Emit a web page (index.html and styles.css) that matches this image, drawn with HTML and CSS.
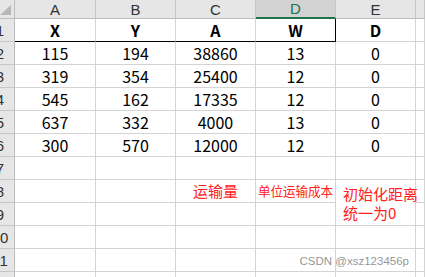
FILE: index.html
```html
<!DOCTYPE html>
<html lang="zh-CN">
<head>
<meta charset="utf-8">
<title>Sheet</title>
<link rel="stylesheet" href="styles.css">
</head>
<body>
<div class="viewport">
  <div class="sheet">
    <div class="corner"><svg class="tri" width="11" height="10" viewBox="0 0 11 10"><polygon points="11,0 11,10 0,10" fill="#b8b8b8"/></svg></div>
    <div class="colh">A</div>
    <div class="colh">B</div>
    <div class="colh">C</div>
    <div class="colh sel">D</div>
    <div class="colh">E</div>
    <div class="colh"></div>

    <div class="rowh">1</div>
    <div class="cell hd bb">X</div>
    <div class="cell hd bb">Y</div>
    <div class="cell hd bb">A</div>
    <div class="cell hd bb br">W</div>
    <div class="cell hd">D</div>
    <div class="cell"></div>

    <div class="rowh">2</div>
    <div class="cell num">115</div>
    <div class="cell num">194</div>
    <div class="cell num">38860</div>
    <div class="cell num">13</div>
    <div class="cell num">0</div>
    <div class="cell"></div>

    <div class="rowh">3</div>
    <div class="cell num">319</div>
    <div class="cell num">354</div>
    <div class="cell num">25400</div>
    <div class="cell num">12</div>
    <div class="cell num">0</div>
    <div class="cell"></div>

    <div class="rowh">4</div>
    <div class="cell num">545</div>
    <div class="cell num">162</div>
    <div class="cell num">17335</div>
    <div class="cell num">12</div>
    <div class="cell num">0</div>
    <div class="cell"></div>

    <div class="rowh">5</div>
    <div class="cell num">637</div>
    <div class="cell num">332</div>
    <div class="cell num">4000</div>
    <div class="cell num">13</div>
    <div class="cell num">0</div>
    <div class="cell"></div>

    <div class="rowh">6</div>
    <div class="cell num">300</div>
    <div class="cell num">570</div>
    <div class="cell num">12000</div>
    <div class="cell num">12</div>
    <div class="cell num">0</div>
    <div class="cell"></div>

    <div class="rowh">7</div>
    <div class="cell"></div>
    <div class="cell"></div>
    <div class="cell"></div>
    <div class="cell"></div>
    <div class="cell"></div>
    <div class="cell"></div>

    <div class="rowh">8</div>
    <div class="cell"></div>
    <div class="cell"></div>
    <div class="cell note">运输量</div>
    <div class="cell note small">单位运输成本</div>
    <div class="cell note wrap"><div class="wraptext">初始化距离统一为0</div></div>
    <div class="cell"></div>

    <div class="rowh">9</div>
    <div class="cell"></div>
    <div class="cell"></div>
    <div class="cell"></div>
    <div class="cell"></div>
    <div class="cell"></div>

    <div class="rowh">10</div>
    <div class="cell"></div>
    <div class="cell"></div>
    <div class="cell"></div>
    <div class="cell"></div>
    <div class="cell"></div>
    <div class="cell"></div>

    <div class="rowh">11</div>
    <div class="cell"></div>
    <div class="cell"></div>
    <div class="cell"></div>
    <div class="cell"></div>
    <div class="cell"></div>
    <div class="cell"></div>

    <div class="rowh">12</div>
    <div class="cell"></div>
    <div class="cell"></div>
    <div class="cell"></div>
    <div class="cell"></div>
    <div class="cell"></div>
    <div class="cell"></div>
  </div>
  <div class="watermark">CSDN @xsz123456p</div>
</div>
</body>
</html>
```
FILE: styles.css
```css
html, body {
  margin: 0;
  padding: 0;
  background: #ffffff;
  overflow: hidden;
}

.viewport {
  position: relative;
  width: 425px;
  height: 277px;
  overflow: hidden;
  font-family: "Noto Sans CJK SC", "Liberation Sans", sans-serif;
}

.sheet {
  display: grid;
  margin-left: -14px;
  grid-template-columns: 29px 81px 80px 80px 80px 80px 1fr;
  grid-template-rows: 19px repeat(12, 23px);
}

.corner {
  background: #e6e6e6;
  border-right: 1px solid #bdbdbd;
  border-bottom: 1px solid #bdbdbd;
  display: flex;
  justify-content: flex-end;
  align-items: flex-end;
  padding: 0 3px 3px 0;
}

.tri {
  display: block;
}

.colh {
  background: #e6e6e6;
  border-right: 1px solid #c6c6c6;
  border-bottom: 1px solid #bdbdbd;
  color: #333333;
  font-family: "Liberation Sans", Arial, sans-serif;
  font-size: 15px;
  line-height: 17px;
  display: flex;
  justify-content: center;
  align-items: center;
}

.colh.sel {
  background: #d2d2d2;
  color: #217346;
  border-bottom: 2px solid #217346;
}

.rowh {
  background: #e6e6e6;
  border-right: 1px solid #bdbdbd;
  border-bottom: 1px solid #c6c6c6;
  color: #333333;
  font-family: "Liberation Sans", Arial, sans-serif;
  font-size: 15px;
  line-height: 17px;
  display: flex;
  justify-content: center;
  align-items: center;
}

.cell {
  border-right: 1px solid #d4d4d4;
  border-bottom: 1px solid #d4d4d4;
  display: flex;
  justify-content: center;
  align-items: center;
  color: #000000;
  white-space: nowrap;
  line-height: 20px;
}

.cell.bb {
  border-bottom-color: #000000;
}

.cell.br {
  border-right-color: #000000;
}

.hd {
  font-size: 16px;
  font-weight: 700;
}

.num {
  font-size: 16px;
}

.note {
  color: #ff2020;
  font-size: 15px;
  align-items: flex-end;
  padding-bottom: 1px;
}

.note.small {
  font-size: 12.6px;
  letter-spacing: -0.1px;
}

.note.wrap {
  grid-row: span 2;
  justify-content: flex-start;
  align-items: flex-start;
  padding: 4px 0 0 7px;
  position: relative;
  z-index: 1;
}

.wraptext {
  width: 76px;
  flex: none;
  white-space: normal;
  line-height: 19px;
}

.watermark {
  position: absolute;
  right: 16px;
  bottom: 10px;
  font-family: "Liberation Sans", Arial, sans-serif;
  font-size: 11.5px;
  color: rgba(120, 120, 120, 0.8);
}
```
